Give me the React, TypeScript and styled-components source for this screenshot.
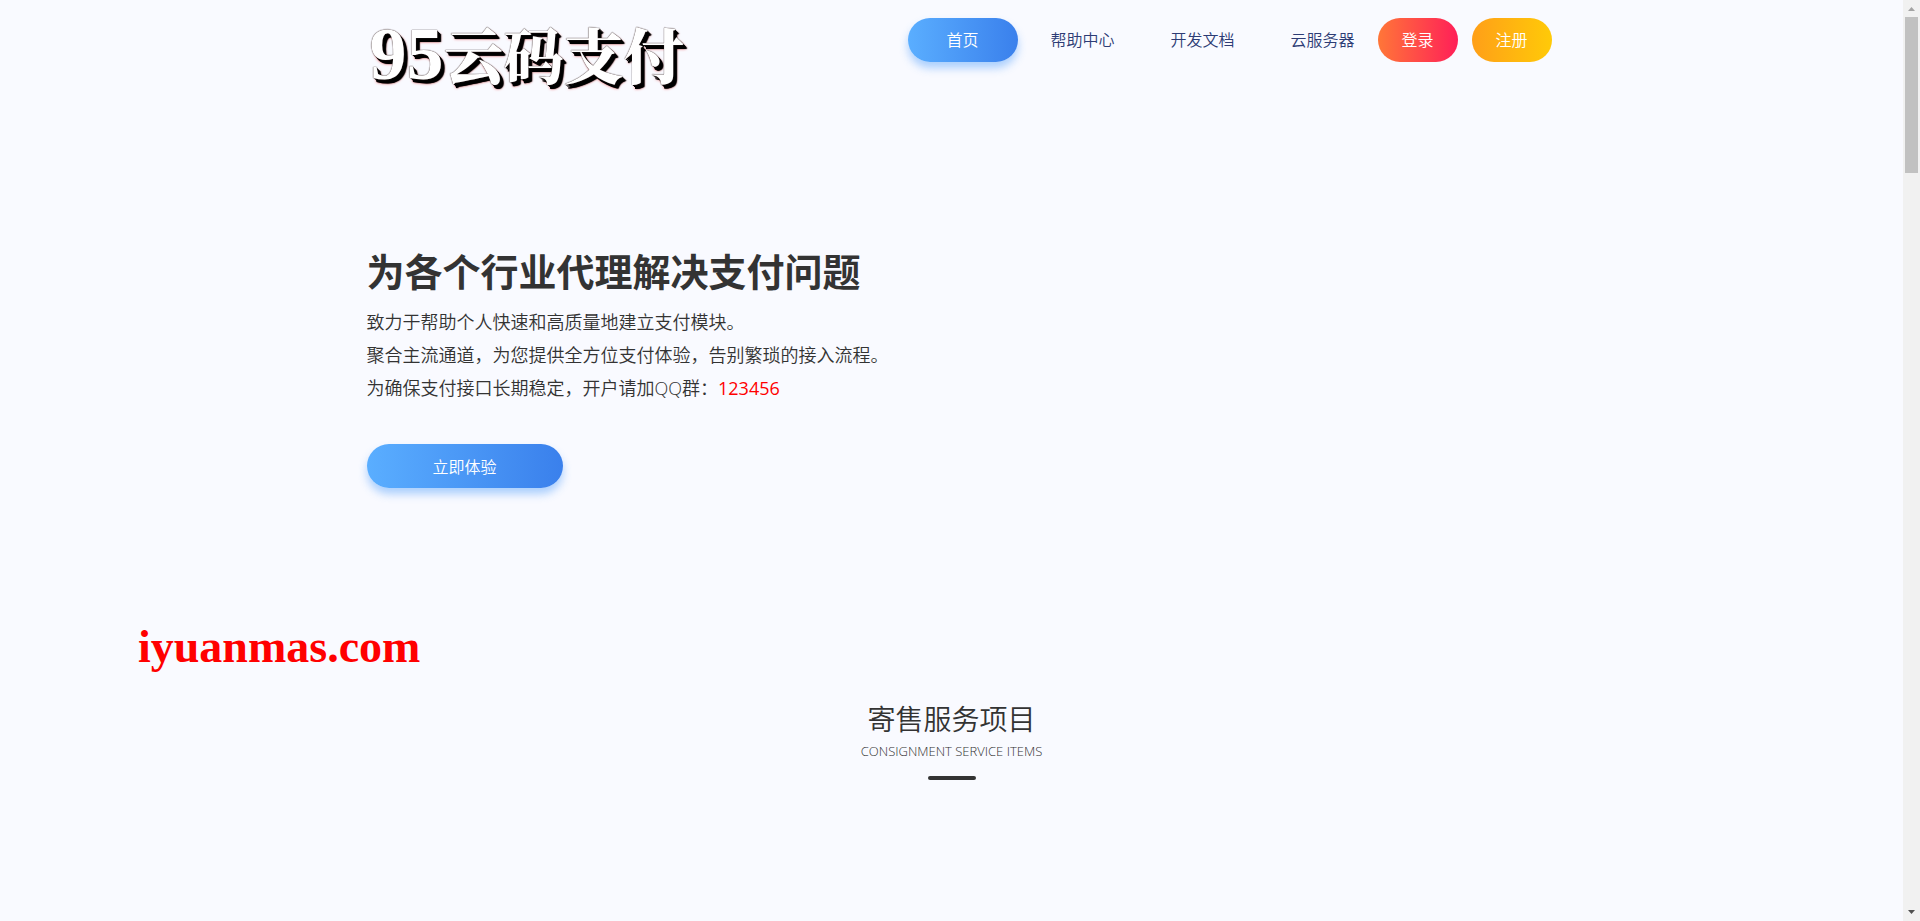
import React from 'react';
import styled, { createGlobalStyle } from 'styled-components';

const GlobalStyle = createGlobalStyle`
  *, *::before, *::after { box-sizing: border-box; }
  body {
    margin: 0;
    background: #f9faff;
    color: #333;
    font-family: "Open Sans", "Noto Sans CJK SC", sans-serif;
    font-size: 16px;
    font-weight: 350;
  }
  h1, h2, p, ul { margin: 0; padding: 0; }
`;

const Page = styled.div`
  display: grid;
  grid-template-columns: minmax(0, 1fr) 17px;
  min-height: 100vh;
`;

const Content = styled.div`
  min-width: 0;
`;

const Container = styled.div`
  width: 100%;
  max-width: 1170px;
  margin: 0 auto;
`;

const Header = styled(Container).attrs({ as: 'header' })`
  display: flex;
  justify-content: space-between;
  align-items: flex-start;
  padding-top: 18px;
`;

const Logo = styled.a`
  display: flex;
  align-items: baseline;
  height: 80px;
  padding-left: 3px;
  color: #fff;
  font-family: "Noto Serif CJK SC", "Liberation Serif", serif;
  font-size: 60px;
  font-weight: 900;
  line-height: 70px;
  text-decoration: none;
  white-space: nowrap;
  text-shadow:
    0 0 1px #433, 0 0 1px #433, 1px 1px 0 #000, 2px 2px 0 #000, 3px 3px 0 #000,
    3px 4px 0 #000, 4px 4px 1px #000, 3px 4px 3px #e66;
`;

const LogoDigits = styled.span`
  font-family: "Liberation Serif", serif;
  font-size: 74px;
`;

const Nav = styled.nav`
  display: flex;
  margin-right: -15px;
`;

const NavList = styled.ul`
  display: flex;
  gap: 10px;
  list-style: none;
`;

const PillLink = styled.a<{ $from?: string; $to?: string; $width?: number; $glow?: boolean }>`
  display: flex;
  align-items: center;
  justify-content: center;
  width: ${({ $width = 110 }) => $width}px;
  height: 44px;
  border-radius: 22px;
  color: ${({ $from }) => ($from ? '#fff' : '#2d3c75')};
  background: ${({ $from, $to }) => ($from ? `linear-gradient(90deg, ${$from}, ${$to})` : 'none')};
  box-shadow: ${({ $glow }) => ($glow ? '0 6px 8px rgba(75, 155, 250, 0.45)' : 'none')};
  font-size: 16px;
  line-height: 24px;
  text-decoration: none;
  white-space: nowrap;
`;

const Account = styled.div`
  display: flex;
  gap: 14px;
`;

const Hero = styled(Container).attrs({ as: 'section' })`
  padding-top: 146px;
`;

const HeroTitle = styled.h1`
  font-size: 38px;
  font-weight: 700;
  line-height: 54px;
  margin-bottom: 8px;
`;

const HeroText = styled.p`
  font-size: 18px;
  line-height: 33px;
`;

const GroupNumber = styled.span`
  color: #f00;
  font-weight: 400;
`;

const HeroAction = styled.div`
  padding-top: 39px;
`;

const TryButton = styled.button`
  display: block;
  width: 196px;
  height: 44px;
  padding: 0;
  border: 0;
  border-radius: 22px;
  color: #fff;
  background: linear-gradient(90deg, #5aaeff, #3a80ec);
  box-shadow: 0 6px 8px rgba(75, 155, 250, 0.45);
  font: inherit;
  cursor: pointer;
`;

const SiteMark = styled.p`
  padding: 126px 0 0 138px;
  color: #f00;
  font-family: "Liberation Serif", serif;
  font-size: 46px;
  font-weight: 700;
  line-height: 66px;
`;

const Services = styled(Container).attrs({ as: 'section' })`
  display: flex;
  flex-direction: column;
  align-items: center;
  padding-top: 19px;
`;

const ServicesTitle = styled.h2`
  font-size: 28px;
  font-weight: 350;
  line-height: 40px;
`;

const ServicesSubtitle = styled.p`
  font-size: 13px;
  line-height: 24px;
`;

const Rule = styled.span`
  width: 48px;
  height: 4px;
  margin-top: 13px;
  border-radius: 2px;
  background: #333;
`;

const Scrollbar = styled.div`
  display: flex;
  flex-direction: column;
  position: sticky;
  top: 0;
  height: 100vh;
  background: #f1f1f1;
`;

const Arrow = styled.svg`
  display: block;
  width: 17px;
  height: 17px;
`;

const Track = styled.div`
  flex: 1;
  padding: 0 2px;
`;

const Thumb = styled.div`
  height: 156px;
  background: #c1c1c1;
`;

const links = ['首页', '帮助中心', '开发文档', '云服务器'];

export default function App() {
  return (
    <>
      <GlobalStyle />
      <Page>
        <Content>
          <Header>
            <Logo href="#">
              <LogoDigits>95</LogoDigits>云码支付
            </Logo>
            <Nav>
              <NavList>
                {links.map((label, i) => (
                  <li key={label}>
                    <PillLink
                      href="#"
                      $from={i === 0 ? '#5aaeff' : undefined}
                      $to="#3a80ec"
                      $glow={i === 0}
                    >
                      {label}
                    </PillLink>
                  </li>
                ))}
              </NavList>
              <Account>
                <PillLink href="#" $width={80} $from="#ff7638" $to="#ff1f58">登录</PillLink>
                <PillLink href="#" $width={80} $from="#ff9f18" $to="#ffca08">注册</PillLink>
              </Account>
            </Nav>
          </Header>
          <main>
            <Hero>
              <HeroTitle>为各个行业代理解决支付问题</HeroTitle>
              <HeroText>致力于帮助个人快速和高质量地建立支付模块。</HeroText>
              <HeroText>聚合主流通道，为您提供全方位支付体验，告别繁琐的接入流程。</HeroText>
              <HeroText>
                为确保支付接口长期稳定，开户请加QQ群：<GroupNumber>123456</GroupNumber>
              </HeroText>
              <HeroAction>
                <TryButton type="button">立即体验</TryButton>
              </HeroAction>
            </Hero>
            <SiteMark>iyuanmas.com</SiteMark>
            <Services>
              <ServicesTitle>寄售服务项目</ServicesTitle>
              <ServicesSubtitle>CONSIGNMENT SERVICE ITEMS</ServicesSubtitle>
              <Rule />
            </Services>
          </main>
        </Content>
        <Scrollbar aria-hidden="true">
          <Arrow viewBox="0 0 17 17"><path d="M5 11 L8.5 7 L12 11 Z" fill="#a3a3a3" /></Arrow>
          <Track><Thumb /></Track>
          <Arrow viewBox="0 0 17 17"><path d="M5 6 L8.5 10 L12 6 Z" fill="#505050" /></Arrow>
        </Scrollbar>
      </Page>
    </>
  );
}
